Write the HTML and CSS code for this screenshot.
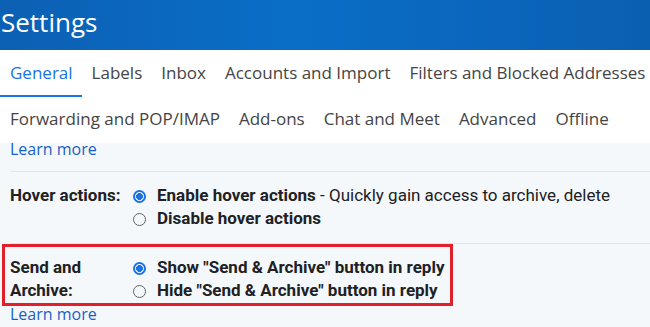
FILE: index.html
```html
<!DOCTYPE html>
<html lang="en">
<head>
    <meta charset="UTF-8">
    <title>Settings</title>
    <link rel="stylesheet" href="styles.css">
</head>
<body>
    <div class="header">
        <h1>Settings</h1>
    </div>

    <div class="tabs">
        <div class="tab-row">
            <a class="tab active">General</a>
            <a class="tab">Labels</a>
            <a class="tab">Inbox</a>
            <a class="tab">Accounts and Import</a>
            <a class="tab">Filters and Blocked Addresses</a>
        </div>
        <div class="tab-row">
            <a class="tab">Forwarding and POP/IMAP</a>
            <a class="tab">Add-ons</a>
            <a class="tab">Chat and Meet</a>
            <a class="tab">Advanced</a>
            <a class="tab">Offline</a>
        </div>
    </div>

    <div class="content">
        <div class="learn">Learn more</div>

        <div class="setting">
            <div class="label">Hover actions:</div>
            <div class="options">
                <div class="option"><span class="radio checked"></span><span><b>Enable hover actions</b> - Quickly gain access to archive, delete</span></div>
                <div class="option"><span class="radio"></span><b>Disable hover actions</b></div>
            </div>
        </div>

        <div class="setting highlighted">
            <div class="label">Send and<br>Archive:</div>
            <div class="options">
                <div class="option"><span class="radio checked"></span><b>Show "Send &amp; Archive" button in reply</b></div>
                <div class="option"><span class="radio"></span><b>Hide "Send &amp; Archive" button in reply</b></div>
            </div>
        </div>

        <div class="learn last">Learn more</div>
    </div>
</body>
</html>
```

FILE: styles.css
```css
body {
    margin: 0;
    width: 650px;
    height: 327px;
    overflow: hidden;
    font-family: Roboto, "Liberation Sans", sans-serif;
    background: #f5f8fa;
    color: #202124;
}
.header {
    height: 50px;
    background: linear-gradient(to right, #0c60b3 0%, #0a6ec7 45%, #0b5fb1 100%);
}
.header h1 {
    margin: 0;
    padding: 7px 0 0 1px;
    font-family: "Open Sans", sans-serif;
    font-weight: 400;
    font-size: 26px;
    color: #fff;
    line-height: 30px;
}
.tabs {
    background: #fff;
    padding-top: 1px;
}
.tab-row {
    display: flex;
    height: 46px;
}
.tab {
    font-family: "Open Sans", sans-serif;
    font-size: 17px;
    color: #444;
    padding: 10px 9px 0 10px;
    white-space: nowrap;
}
.tab.active {
    color: #1a73e8;
    border-bottom: 2px solid #1a73e8;
    height: 34px;
}
.content {
    padding-left: 10px;
}
.learn {
    font-family: "Open Sans", sans-serif;
    font-size: 16px;
    color: #1a5fc9;
    height: 28px;
    line-height: 13px;
    border-bottom: 1px solid #e2e6ea;
}
.learn.last {
    border-bottom: none;
    line-height: 17px;
}
.setting {
    display: flex;
    padding: 12px 0 13px 0;
    font-size: 17px;
    line-height: 23px;
    border-bottom: 1px solid #e2e6ea;
}
.label {
    width: 123px;
    font-weight: 700;
}
.option {
    display: flex;
    align-items: center;
}
.radio {
    width: 13px;
    height: 13px;
    border: 1px solid #5f6368;
    border-radius: 50%;
    margin: 2px 11px 0 0;
    box-sizing: border-box;
    flex: none;
}
.radio.checked {
    border: 2px solid #1a73e8;
    background: radial-gradient(circle, #1a73e8 0 3.2px, transparent 3.7px);
}
.setting.highlighted {
    border: 3px solid #e3202a;
    box-sizing: border-box;
    width: 451px;
    height: 62px;
    padding: 9px 0 0 5px;
    margin-left: -8px;
}
.highlighted .label {
    width: 123px;
}
```
